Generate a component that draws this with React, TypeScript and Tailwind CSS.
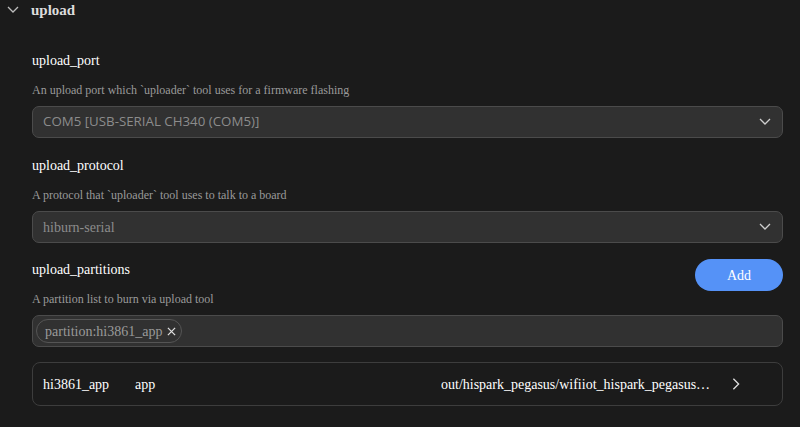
import type { ReactNode } from "react";

const serif = "font-['Liberation_Serif','DejaVu_Serif',serif]";

function ChevronDown({ className }: { className?: string }) {
  return (
    <svg viewBox="0 0 16 16" className={className} fill="none" stroke="currentColor" strokeWidth="1.3">
      <path d="M3 5 8 10 13 5" />
    </svg>
  );
}

function ChevronRight({ className }: { className?: string }) {
  return (
    <svg viewBox="0 0 16 16" className={className} fill="none" stroke="currentColor" strokeWidth="1.5">
      <path d="M5 2 11 8 5 14" />
    </svg>
  );
}

function Field({
  label,
  description,
  action,
  children,
}: {
  label: string;
  description: string;
  action?: ReactNode;
  children: ReactNode;
}) {
  return (
    <div className="flex flex-col">
      <div className="flex h-[20px] items-start justify-between">
        <span className="text-[14px] leading-[20px] text-white">{label}</span>
        {action}
      </div>
      <div className="mt-[9px] h-[20px] text-[12px] leading-[20px] text-[#9a9a9a]">{description}</div>
      <div className="mt-[6px]">{children}</div>
    </div>
  );
}

function Select({ value, sans }: { value: string; sans?: boolean }) {
  return (
    <div className="flex h-[32px] items-center justify-between rounded-[7px] border border-[#4b4b4b] bg-[#313131] pr-[9px] pl-[10px]">
      <span
        className={
          sans
            ? "font-['Open_Sans','Liberation_Sans',sans-serif] text-[13.3px] text-[#8c8c8c]"
            : "text-[14px] text-[#8c8c8c]"
        }
      >
        {value}
      </span>
      <ChevronDown className="h-[16px] w-[16px] text-[#cfcfcf]" />
    </div>
  );
}

export default function App() {
  return (
    <div className={`h-[427px] w-[800px] overflow-hidden bg-[#1b1b1b] ${serif}`}>
      <div className="flex h-[20px] items-center pl-[5px]">
        <ChevronDown className="h-[16px] w-[16px] text-[#bdbdbd]" />
        <span className="ml-[10px] text-[15px] font-bold text-[#dcdcdc]">upload</span>
      </div>
      <div className="flex w-[783px] flex-col pt-[31px] pl-[32px]">
        <Field label="upload_port" description="An upload port which `uploader` tool uses for a firmware flashing">
          <Select value="COM5 [USB-SERIAL CH340 (COM5)]" sans />
        </Field>
        <div className="mt-[18px]">
          <Field label="upload_protocol" description="A protocol that `uploader` tool uses to talk to a board">
            <Select value="hiburn-serial" />
          </Field>
        </div>
        <div className="mt-[17px]">
          <Field
            label="upload_partitions"
            description="A partition list to burn via upload tool"
            action={
              <button className="-mt-[1px] flex h-[32px] w-[88px] shrink-0 items-center justify-center rounded-full bg-[#5592f7] text-[14px] text-white">
                Add
              </button>
            }
          >
            <div className="flex h-[32px] items-center rounded-[7px] border border-[#4b4b4b] bg-[#313131] pl-[3px]">
              <span className="flex h-[24px] items-center gap-[5px] rounded-full border border-[#555] pr-[5px] pl-[8px] text-[14px] text-[#9a9a9a]">
                partition:hi3861_app
                <svg viewBox="0 0 10 10" className="h-[9px] w-[9px] text-[#e0e0e0]" fill="none" stroke="currentColor" strokeWidth="1.4">
                  <path d="M1 1 9 9M9 1 1 9" />
                </svg>
              </span>
            </div>
          </Field>
        </div>
        <div className="mt-[15px] flex h-[44px] items-center rounded-[8px] border border-[#3d3d3d] pl-[10px] text-[14px] text-white">
          <span className="w-[92px] shrink-0">hi3861_app</span>
          <span className="w-[306px] shrink-0">app</span>
          <span className="w-[270px] shrink-0 truncate">
            out/hispark_pegasus/wifiiot_hispark_pegasus/Hi3861_wifiiot_app_allinone.bin
          </span>
          <ChevronRight className="ml-[18px] h-[14px] w-[14px] text-[#e0e0e0]" />
        </div>
      </div>
    </div>
  );
}
